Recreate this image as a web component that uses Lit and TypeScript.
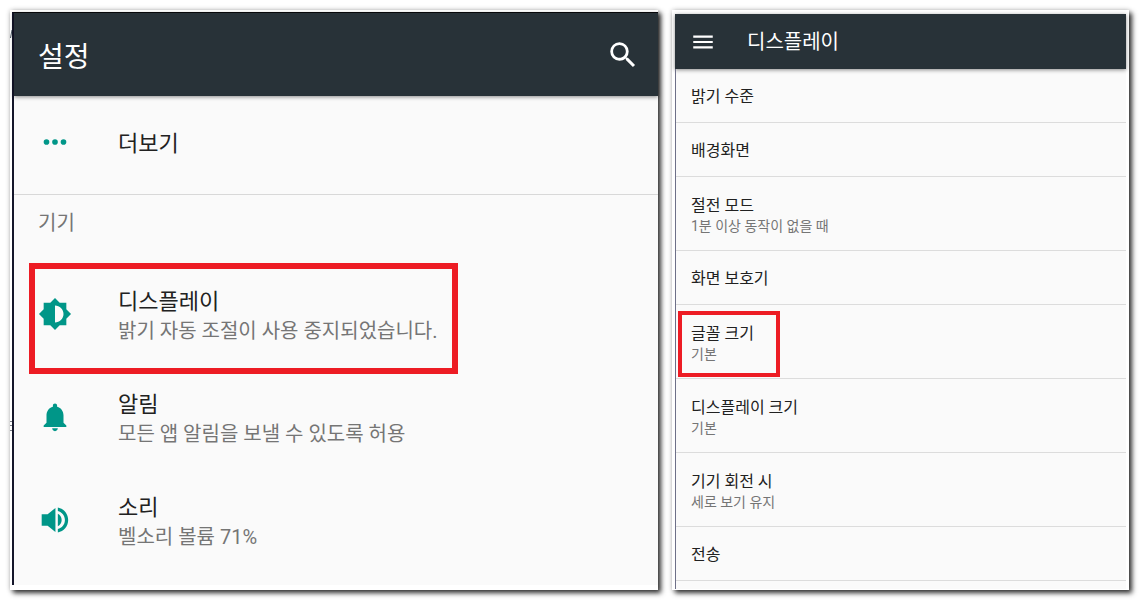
import { LitElement, html, css, svg, nothing } from "lit";
import { customElement, property } from "lit/decorators.js";

const FONT = css`Roboto, "Noto Sans CJK KR", sans-serif`;

const ICONS: Record<string, string> = {
  more: "M6 10a2 2 0 1 0 0 4 2 2 0 0 0 0-4zm6 0a2 2 0 1 0 0 4 2 2 0 0 0 0-4zm6 0a2 2 0 1 0 0 4 2 2 0 0 0 0-4z",
  brightness:
    "M20 15.31L23.31 12 20 8.69V4h-4.69L12 .69 8.69 4H4v4.69L.69 12 4 15.31V20h4.69L12 23.31 15.31 20H20v-4.69zM12 18V6c3.31 0 6 2.69 6 6s-2.69 6-6 6z",
  bell: "M12 22c1.1 0 2-.9 2-2h-4c0 1.1.9 2 2 2zm6-6v-5c0-3.07-1.64-5.64-4.5-6.32V4c0-.83-.67-1.5-1.5-1.5s-1.5.67-1.5 1.5v.68C7.63 5.36 6 7.92 6 11v5l-2 2v1h16v-1l-2-2z",
  volume:
    "M2.6 8v8h4.2l5.500 4.500v-17L6.800 8zM14 7.600v8.800c1.600-.8 2.700-2.500 2.700-4.400s-1.100-3.600-2.700-4.400zM14 3.200v2.400c2.900.7 5 3.300 5 6.400s-2.100 5.700-5 6.400v2.400c4.200-.8 7.300-4.400 7.300-8.800S18.200 4 14 3.200z",
  search:
    "M15.5 14h-.79l-.28-.27A6.471 6.471 0 0 0 16 9.500 6.500 6.500 0 1 0 9.500 16c1.610 0 3.090-.59 4.230-1.570l.27.28v.79l5 4.990L20.490 19l-4.990-5zm-6 0C7.010 14 5 11.990 5 9.500S7.010 5 9.500 5 14 7.010 14 9.500 11.990 14 9.500 14z",
  menu: "M3 18h18v-2H3v2zm0-5h18v-2H3v2zm0-7v2h18V6H3z",
};

@customElement("md-icon")
class MdIcon extends LitElement {
  static styles = css`
    :host {
      display: block;
      width: 34px;
      height: 34px;
      flex: none;
    }
    .glyph {
      display: block;
      width: 100%;
      height: 100%;
      fill: currentColor;
    }
  `;
  @property() name = "";
  render() {
    return html`<svg class="glyph" viewBox="0 0 24 24" aria-hidden="true">
      ${svg`<path d=${ICONS[this.name] ?? ""}></path>`}
    </svg>`;
  }
}

interface Entry {
  title: string;
  sub?: string;
  icon?: string;
  marked?: boolean;
}

const DEVICE: Entry[] = [
  { title: "디스플레이", sub: "밝기 자동 조절이 사용 중지되었습니다.", icon: "brightness", marked: true },
  { title: "알림", sub: "모든 앱 알림을 보낼 수 있도록 허용", icon: "bell" },
  { title: "소리", sub: "벨소리 볼륨 71%", icon: "volume" },
];

const DISPLAY: Entry[] = [
  { title: "밝기 수준" },
  { title: "배경화면" },
  { title: "절전 모드", sub: "1분 이상 동작이 없을 때" },
  { title: "화면 보호기" },
  { title: "글꼴 크기", sub: "기본", marked: true },
  { title: "디스플레이 크기", sub: "기본" },
  { title: "기기 회전 시", sub: "세로 보기 유지" },
  { title: "전송" },
];

const shared = css`
  :host {
    display: flex;
    flex-direction: column;
    background: #fafafa;
    color: #212121;
    font-family: ${FONT};
  }
  .bar {
    display: flex;
    align-items: center;
    box-sizing: border-box;
    background: #283238;
    color: #fff;
    box-shadow: 0 1px 4px rgba(0, 0, 0, 0.45);
  }
  .heading {
    margin: 0;
    font-weight: 400;
  }
  .action {
    display: block;
    padding: 0;
    border: 0;
    background: none;
    color: inherit;
  }
  .list {
    list-style: none;
    margin: 0;
    padding: 0;
  }
  .item {
    position: relative;
  }
  .link {
    display: flex;
    align-items: center;
    box-sizing: border-box;
    color: inherit;
    text-decoration: none;
  }
  .title,
  .sub {
    display: block;
    white-space: nowrap;
  }
  .sub {
    color: #757575;
  }
  .mark {
    position: absolute;
    box-sizing: border-box;
    border: solid #ed1c24;
    pointer-events: none;
  }
`;

@customElement("settings-screen")
class SettingsScreen extends LitElement {
  static styles = [
    shared,
    css`
      :host {
        border-top: 1px solid #08090c;
        border-left: 2px solid #14162a;
      }
      .bar {
        height: 83px;
        padding: 0 18px 0 24px;
        justify-content: space-between;
      }
      .heading {
        padding-top: 6px;
        font-size: 28px;
        line-height: 40px;
      }
      .link {
        height: 103px;
        padding: 0 0 2px 24px;
        gap: 46px;
      }
      .link.first {
        height: 98px;
        padding-bottom: 6px;
      }
      .link md-icon {
        color: #009688;
      }
      .text {
        padding-top: 4px;
      }
      .title {
        font-size: 22px;
        line-height: 30px;
      }
      .sub {
        font-size: 20px;
        line-height: 28px;
      }
      .label {
        margin: 0;
        padding: 14px 24px 26px;
        border-top: 1px solid #d8d8d8;
        font-size: 20px;
        font-weight: 400;
        line-height: 28px;
        color: #757575;
      }
      .devices {
        padding-bottom: 13px;
      }
      .mark {
        left: 15px;
        top: 0;
        width: 429px;
        height: 111px;
        border-width: 6px;
      }
    `,
  ];
  row(e: Entry, first = false) {
    return html`<li class="item">
      <a class=${first ? "link first" : "link"} href="#">
        <md-icon name=${e.icon ?? ""}></md-icon>
        <span class="text">
          <span class="title">${e.title}</span>
          ${e.sub ? html`<span class="sub">${e.sub}</span>` : nothing}
        </span>
      </a>
      ${e.marked ? html`<span class="mark"></span>` : nothing}
    </li>`;
  }
  render() {
    return html`
      <header class="bar">
        <h1 class="heading">설정</h1>
        <button class="action" aria-label="검색"><md-icon name="search"></md-icon></button>
      </header>
      <ul class="list">${this.row({ title: "더보기", icon: "more" }, true)}</ul>
      <h2 class="label">기기</h2>
      <ul class="list devices">${DEVICE.map((e) => this.row(e))}</ul>
    `;
  }
}

@customElement("display-screen")
class DisplayScreen extends LitElement {
  static styles = [
    shared,
    css`
      .bar {
        height: 55px;
        padding: 0 15px;
        gap: 31px;
      }
      .action md-icon {
        width: 26px;
        height: 26px;
      }
      .heading {
        font-size: 20px;
        line-height: 28px;
      }
      .list {
        flex: 1;
        border-left: 1px solid #6e7088;
      }
      .link {
        height: 54px;
        padding: 2px 0 0 15px;
        border-bottom: 1px solid #dcdcdc;
      }
      .link.tall {
        height: 74px;
      }
      .title {
        font-size: 16px;
        line-height: 22px;
      }
      .sub {
        font-size: 14px;
        line-height: 18px;
      }
      .mark {
        left: 2px;
        top: 6px;
        width: 102px;
        height: 66px;
        border-width: 4px;
      }
    `,
  ];
  render() {
    return html`
      <header class="bar">
        <button class="action" aria-label="메뉴"><md-icon name="menu"></md-icon></button>
        <h1 class="heading">디스플레이</h1>
      </header>
      <ul class="list">
        ${DISPLAY.map(
          (e) => html`<li class="item">
            <a class=${e.sub ? "link tall" : "link"} href="#">
              <span>
                <span class="title">${e.title}</span>
                ${e.sub ? html`<span class="sub">${e.sub}</span>` : nothing}
              </span>
            </a>
            ${e.marked ? html`<span class="mark"></span>` : nothing}
          </li>`
        )}
      </ul>
    `;
  }
}

@customElement("app-root")
class AppRoot extends LitElement {
  static styles = css`
    :host {
      display: grid;
      grid-template-columns: 648fr 457fr;
      gap: 14px;
      padding: 10px 12px 11px 10px;
      background: #fff;
    }
    .card {
      position: relative;
      display: flex;
      flex-direction: column;
      box-sizing: border-box;
      background: #fff;
      box-shadow:
        3px 3px 5px rgba(0, 0, 0, 0.8),
        0 0 5px rgba(0, 0, 0, 0.2);
    }
    .left {
      padding: 2px 0 5px 2px;
    }
    .right {
      padding: 4px 3px 1px;
    }
    .card > settings-screen,
    .card > display-screen {
      flex: 1;
    }
    .edge {
      position: absolute;
      left: 0;
      top: 0;
      width: 2px;
      height: 500px;
    }
  `;
  render() {
    return html`
      <section class="card left">
        <svg class="edge" viewBox="0 0 2 500" aria-hidden="true">
          <path d="M2 20L.5 28" stroke="#4a5560" fill="none" />
          <path d="M0 411.500h2M0 415.500h2M0 420.500h2" stroke="#7b7f88" fill="none" />
        </svg>
        <settings-screen></settings-screen>
      </section>
      <section class="card right"><display-screen></display-screen></section>
    `;
  }
}
